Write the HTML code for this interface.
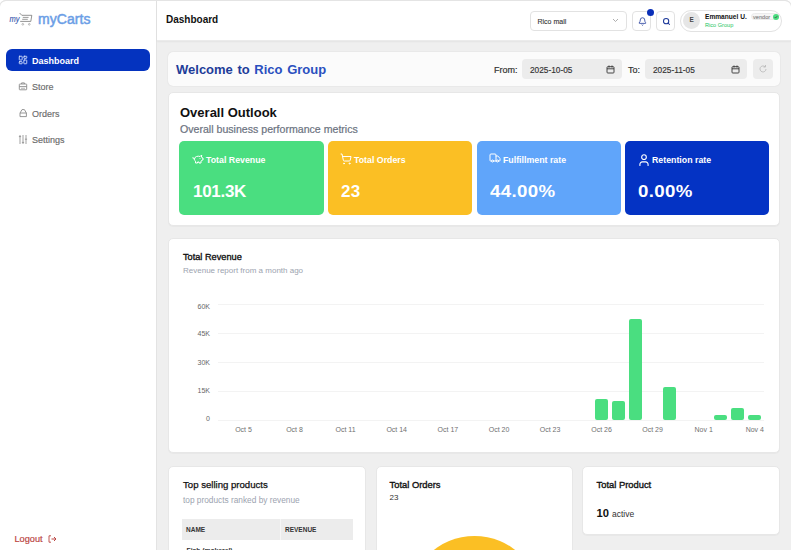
<!DOCTYPE html>
<html><head><meta charset="utf-8">
<style>
*{box-sizing:border-box;margin:0;padding:0}
html,body{width:791px;height:550px;overflow:hidden;background:#efefef;font-family:"Liberation Sans",sans-serif;color:#111}
.abs{position:absolute}
.t{position:absolute;white-space:nowrap;line-height:1}
#side{position:absolute;left:0;top:0;width:157px;height:550px;background:#fff;border-right:1px solid #e3e3e3}
#head{position:absolute;left:157px;top:0;width:634px;height:41px;background:#fff;border-bottom:1px solid #ebebeb;box-shadow:0 1px 1.5px rgba(0,0,0,.05)}
.card{position:absolute;background:#fff;border-radius:5px;border:1px solid #e7e7e7;box-shadow:0 1px 1px rgba(0,0,0,.03)}
.stat{position:absolute;top:140.8px;height:74.2px;border-radius:5px;color:#fff}
.slbl{top:156px;font-size:8.8px;font-weight:bold;color:#fff}
.sval{top:182.6px;font-size:17px;font-weight:bold;color:#fff}
.nav{position:absolute;left:19px;font-size:9px;color:#6b6b6b;line-height:1;white-space:nowrap;display:flex;align-items:center}
.nav svg{margin-right:5px}
.ylab{position:absolute;margin-top:0.6px;right:581px;font-size:7px;color:#666;line-height:1;text-align:right}
.xlab{position:absolute;top:426px;font-size:7px;color:#707070;line-height:1;white-space:nowrap;transform:translateX(-50%)}
.grid{position:absolute;left:218px;width:546px;height:1px;background:#f3f3f3}
.bar{position:absolute;width:13px;background:#4ade80;border-radius:2px}
</style></head>
<body>
<!-- SIDEBAR -->
<div id="side">
  <!-- logo -->
  <svg class="abs" style="left:9px;top:12px" width="25" height="15" viewBox="0 0 25 15">
    <text x="0.6" y="9.9" font-family="Liberation Sans" font-style="italic" font-size="9" fill="#3b5bb0" textLength="10" lengthAdjust="spacingAndGlyphs" stroke="#3b5bb0" stroke-width="0.15">my</text>
    <path d="M10.6 1 L12.8 3.3 L22.8 3.3 L21.8 9.4 L11.2 9.4" fill="none" stroke="#666" stroke-width="0.7"/>
    <path d="M13.8 5.4 H19.6 M13.2 7.3 H18.8" stroke="#666" stroke-width="0.65"/>
    <circle cx="13.8" cy="12.3" r="0.85" fill="none" stroke="#888" stroke-width="0.55"/>
    <circle cx="20.3" cy="12.3" r="0.85" fill="none" stroke="#888" stroke-width="0.55"/>
  </svg>
  <div class="t" style="left:38px;top:12px;font-size:14px;color:#6b9ee6;font-weight:normal;letter-spacing:0.05px;-webkit-text-stroke:0.5px #6b9ee6">myCarts</div>

  <div class="abs" style="left:6px;top:49px;width:144px;height:22px;background:#0433bf;border-radius:6px"></div>
  <div class="t" style="left:32px;top:56.8px;font-size:9px;font-weight:bold;color:#fff">Dashboard</div>
  <svg class="abs" style="left:17.7px;top:55px" width="10" height="10" viewBox="0 0 24 24" fill="none" stroke="#dbe6ff" stroke-width="2.1" stroke-linecap="round" stroke-linejoin="round"><rect width="7" height="9" x="3" y="3" rx="1"/><rect width="7" height="5" x="14" y="3" rx="1"/><rect width="7" height="9" x="14" y="12" rx="1"/><rect width="7" height="5" x="3" y="16" rx="1"/></svg>
  <div class="t" style="left:32px;top:83px;font-size:9px;color:#6b6b6b;-webkit-text-stroke:0.15px #6b6b6b">Store</div>
  <svg class="abs" style="left:18px;top:81px" width="10" height="10" viewBox="0 0 10 10" fill="none" stroke="#8a8a8a" stroke-width="0.9" stroke-linejoin="round"><rect x="1.3" y="3" width="7.4" height="5.8" rx="0.6"/><path d="M3.6 3 V1.9 H6.4 V3 M1.3 5.6 H8.7"/><path d="M3 7.3 H7" stroke-width="0.6"/></svg>
  <div class="t" style="left:32px;top:110px;font-size:9px;color:#6b6b6b;-webkit-text-stroke:0.15px #6b6b6b">Orders</div>
  <svg class="abs" style="left:18px;top:108px" width="10" height="10" viewBox="0 0 10 10" fill="none" stroke="#8a8a8a" stroke-width="0.9" stroke-linejoin="round"><path d="M2 8.6 H8.4 V5 L6.4 1.6 H4 L2 5 Z M2 5 H8.4"/></svg>
  <div class="t" style="left:32px;top:136px;font-size:9px;color:#6b6b6b;-webkit-text-stroke:0.15px #6b6b6b">Settings</div>
  <svg class="abs" style="left:18px;top:134px" width="10" height="11" viewBox="0 0 10 11" fill="none" stroke="#8a8a8a" stroke-width="0.8"><path d="M2 1 V10 M5 1 V10 M8 1 V10 M0.9 2.6 H3.1 M3.9 8.4 H6.1 M6.9 5.2 H9.1"/></svg>

  <div class="t" style="left:14.5px;top:535px;font-size:9.2px;color:#bb4744;-webkit-text-stroke:0.2px #bb4744">Logout</div>
  <svg class="abs" style="left:48px;top:535px" width="9" height="8" viewBox="0 0 9 8"><path d="M3 0.8 H1 V7.2 H3" fill="none" stroke="#bb4744" stroke-width="0.9"/><path d="M3.5 4 H8 M6 2 L8 4 L6 6" fill="none" stroke="#bb4744" stroke-width="1"/></svg>
</div>

<!-- HEADER -->
<div id="head">
  <div class="t" style="left:9px;top:15px;font-size:10px;font-weight:bold;color:#111">Dashboard</div>
  <div class="abs" style="left:373px;top:11px;width:97px;height:20px;border:1px solid #e2e2e2;border-radius:4px"></div>
  <div class="t" style="left:380.5px;top:17.5px;font-size:7px;color:#333;-webkit-text-stroke:0.1px #333">Rico mall</div>
  <svg class="abs" style="left:455px;top:18px" width="7" height="5" viewBox="0 0 7 5"><path d="M1 1 L3.5 3.5 L6 1" fill="none" stroke="#999" stroke-width="0.8"/></svg>

  <div class="abs" style="left:475px;top:11px;width:19px;height:20px;border:1px solid #e2e2e2;border-radius:4px"></div>
  <svg class="abs" style="left:480.5px;top:16.5px" width="9" height="9" viewBox="0 0 24 24" fill="none" stroke="#1e3a9a" stroke-width="2.1" stroke-linecap="round" stroke-linejoin="round"><path d="M10.268 21a2 2 0 0 0 3.464 0"/><path d="M3.262 15.326A1 1 0 0 0 4 17h16a1 1 0 0 0 .74-1.673C19.41 13.956 18 12.499 18 8A6 6 0 0 0 6 8c0 4.499-1.411 5.956-2.738 7.326"/></svg>
  <div class="abs" style="left:490px;top:9px;width:7px;height:7px;border-radius:50%;background:#0a2fb8"></div>

  <div class="abs" style="left:499px;top:11px;width:19px;height:20px;border:1px solid #e2e2e2;border-radius:4px"></div>
  <svg class="abs" style="left:504.5px;top:16.5px" width="9" height="9" viewBox="0 0 24 24" fill="none" stroke="#1e3a9a" stroke-width="2.8" stroke-linecap="round" stroke-linejoin="round"><circle cx="11" cy="11" r="7"/><path d="m20 20-3.5-3.5"/></svg>

  <div class="abs" style="left:523px;top:10px;width:102px;height:22px;border:1px solid #e2e2e2;border-radius:11px"></div>
  <div class="abs" style="left:526px;top:12px;width:17px;height:17px;border-radius:50%;background:#e6e6e6"></div>
  <div class="t" style="left:532.5px;top:17.4px;font-size:6.4px;font-weight:bold;color:#444">E</div>
  <div class="t" style="left:548px;top:14px;font-size:6.6px;font-weight:bold;color:#111">Emmanuel U.</div>
  <div class="t" style="left:548px;top:22.5px;font-size:5.6px;color:#22c55e">Rico Group</div>
  <div class="abs" style="left:594px;top:12.5px;width:28px;height:7.5px;border-radius:4px;background:#f6f6f6;border:0.5px solid #ececec"></div>
  <div class="t" style="left:596px;top:15px;font-size:5.6px;color:#8a8a8a;-webkit-text-stroke:0.15px #8a8a8a">vendor</div>
  <div class="abs" style="left:615.5px;top:13.5px;width:6px;height:6px;border-radius:50%;background:#4ade80"></div><svg class="abs" style="left:615.5px;top:13.5px" width="6" height="6" viewBox="0 0 10 10"><path d="M2.8 5.2 L4.3 6.7 L7.2 3.4" fill="none" stroke="#444" stroke-width="1.3"/></svg>
</div>

<!-- WELCOME -->
<div class="card" style="left:168px;top:52.4px;width:612px;height:33.6px;background:#fbfbfb;border:none;box-shadow:0 0 1.5px rgba(0,0,0,.12)"></div>
<div class="t" style="left:176px;top:63.2px;font-size:13px;font-weight:bold;color:#1e3d99;word-spacing:1px">Welcome to <span style="color:#2a4fbf">Rico Group</span></div>
<div class="t" style="left:494px;top:66px;font-size:9px;color:#333;-webkit-text-stroke:0.2px #333">From:</div>
<div class="abs" style="left:522px;top:59px;width:100px;height:20px;border-radius:4px;background:#ececec"></div>
<div class="t" style="left:530px;top:66px;font-size:8.3px;color:#333;-webkit-text-stroke:0.15px #333">2025-10-05</div>
<svg class="abs" style="left:606px;top:65px" width="9" height="9" viewBox="0 0 9 9"><rect x="1" y="1.7" width="7" height="6.3" rx="0.8" fill="none" stroke="#333" stroke-width="0.9"/><path d="M1 3.8 H8 M3 0.5 V2.5 M6 0.5 V2.5" stroke="#333" stroke-width="0.9"/></svg>
<div class="t" style="left:628px;top:66px;font-size:9px;color:#333;-webkit-text-stroke:0.2px #333">To:</div>
<div class="abs" style="left:645px;top:59px;width:102px;height:20px;border-radius:4px;background:#ececec"></div>
<div class="t" style="left:653px;top:66px;font-size:8.3px;color:#333;-webkit-text-stroke:0.15px #333">2025-11-05</div>
<svg class="abs" style="left:731px;top:65px" width="9" height="9" viewBox="0 0 9 9"><rect x="1" y="1.7" width="7" height="6.3" rx="0.8" fill="none" stroke="#333" stroke-width="0.9"/><path d="M1 3.8 H8 M3 0.5 V2.5 M6 0.5 V2.5" stroke="#333" stroke-width="0.9"/></svg>
<div class="abs" style="left:753px;top:59px;width:20px;height:20px;border-radius:4px;background:#ececec"></div>
<svg class="abs" style="left:758px;top:64px" width="10" height="10" viewBox="0 0 10 10"><path d="M8 5 a3 3 0 1 1 -1 -2.3" fill="none" stroke="#bbb" stroke-width="0.9"/><path d="M7.5 1 V3 H5.5" fill="none" stroke="#bbb" stroke-width="0.9"/></svg>

<!-- OVERALL OUTLOOK -->
<div class="card" style="left:168px;top:92px;width:612px;height:134px"></div>
<div class="t" style="left:180px;top:105.7px;font-size:13px;font-weight:bold;color:#111">Overall Outlook</div>
<div class="t" style="left:180px;top:123.5px;font-size:10.6px;color:#6b7280;-webkit-text-stroke:0.2px #6b7280">Overall business performance metrics</div>

<div class="stat" style="left:179px;width:145px;background:#4ade80"></div>
<div class="stat" style="left:328px;width:144px;background:#fbbf24"></div>
<div class="stat" style="left:477px;width:144px;background:#60a5fa"></div>
<div class="stat" style="left:625px;width:144px;background:#0433c4"></div>
<svg class="abs" style="left:192px;top:153px" width="12" height="12" viewBox="0 0 24 24" fill="none" stroke="#fff" stroke-width="2" stroke-linecap="round" stroke-linejoin="round"><path d="M19 5c-1.5 0-2.8 1.4-3 2-3.5-1.5-11-.3-11 5 0 1.8 0 3 2 4.5V20h4v-2h3v2h4v-4c1-.5 1.7-1 2-2h2v-4h-2c0-1-.5-1.5-1-2V5z"/><path d="M2 9v1c0 1.1.9 2 2 2h1"/><path d="M16 11h.01"/></svg>
<svg class="abs" style="left:339.8px;top:153.3px" width="12" height="12" viewBox="0 0 24 24" fill="none" stroke="#fff" stroke-width="2" stroke-linecap="round" stroke-linejoin="round"><circle cx="8" cy="21" r="1"/><circle cx="19" cy="21" r="1"/><path d="M2.05 2.05h2l2.66 12.42a2 2 0 0 0 2 1.58h9.78a2 2 0 0 0 1.95-1.57l1.65-7.43H5.12"/></svg>
<svg class="abs" style="left:489px;top:152px" width="12" height="12" viewBox="0 0 24 24" fill="none" stroke="#fff" stroke-width="2" stroke-linecap="round" stroke-linejoin="round"><path d="M14 18V6a2 2 0 0 0-2-2H4a2 2 0 0 0-2 2v11a1 1 0 0 0 1 1h2"/><path d="M15 18H9"/><path d="M19 18h2a1 1 0 0 0 1-1v-3.65a1 1 0 0 0-.22-.624l-3.48-4.35A1 1 0 0 0 17.52 8H14"/><circle cx="17" cy="18" r="2"/><circle cx="7" cy="18" r="2"/></svg>
<svg class="abs" style="left:636.5px;top:152.5px" width="14" height="13" viewBox="0 0 24 22" preserveAspectRatio="none" fill="none" stroke="#fff" stroke-width="1.9" stroke-linecap="round" stroke-linejoin="round"><path d="M19 21v-2a4 4 0 0 0-4-4H9a4 4 0 0 0-4 4v2"/><circle cx="12" cy="7" r="4"/></svg>
<div class="t slbl" style="left:206px">Total Revenue</div>
<div class="t slbl" style="left:354px">Total Orders</div>
<div class="t slbl" style="left:503px">Fulfillment rate</div>
<div class="t slbl" style="left:652px">Retention rate</div>
<div class="t sval" style="left:193px;letter-spacing:-0.3px">101.3K</div>
<div class="t sval" style="left:341px;letter-spacing:0.2px">23</div>
<div class="t sval" style="left:490px;letter-spacing:0.3px;transform:scaleX(1.1);transform-origin:0 0">44.00%</div>
<div class="t sval" style="left:638px;letter-spacing:0.3px;transform:scaleX(1.1);transform-origin:0 0">0.00%</div>

<!-- CHART -->
<div class="card" style="left:168px;top:238px;width:612px;height:214.8px"></div>
<div class="t" style="left:183px;top:253px;font-size:9.2px;color:#111;-webkit-text-stroke:0.35px #111">Total Revenue</div>
<div class="t" style="left:183px;top:266.7px;font-size:8px;color:#9ca3af">Revenue report from a month ago</div>

<div class="grid" style="top:304px"></div>
<div class="grid" style="top:333px"></div>
<div class="grid" style="top:362px"></div>
<div class="grid" style="top:391px"></div>
<div class="grid" style="top:420.3px"></div>
<div class="ylab" style="top:302.5px">60K</div>
<div class="ylab" style="top:329.3px">45K</div>
<div class="ylab" style="top:358.3px">30K</div>
<div class="ylab" style="top:386.8px">15K</div>
<div class="ylab" style="top:414.8px">0</div>

<div class="xlab" style="left:243.5px">Oct 5</div>
<div class="xlab" style="left:294.5px">Oct 8</div>
<div class="xlab" style="left:345.5px">Oct 11</div>
<div class="xlab" style="left:396.7px">Oct 14</div>
<div class="xlab" style="left:447.9px">Oct 17</div>
<div class="xlab" style="left:499px">Oct 20</div>
<div class="xlab" style="left:550px">Oct 23</div>
<div class="xlab" style="left:601.5px">Oct 26</div>
<div class="xlab" style="left:652.5px">Oct 29</div>
<div class="xlab" style="left:703.7px">Nov 1</div>
<div class="xlab" style="left:754.8px">Nov 4</div>

<div class="bar" style="left:595px;top:399px;height:20.5px"></div>
<div class="bar" style="left:612px;top:401px;height:18.5px"></div>
<div class="bar" style="left:629px;top:318.6px;height:101.2px"></div>
<div class="bar" style="left:663px;top:386.5px;height:33px"></div>
<div class="bar" style="left:714px;top:415px;height:4.6px"></div>
<div class="bar" style="left:731px;top:408px;height:11.5px"></div>
<div class="bar" style="left:748px;top:415px;height:4.6px"></div>

<!-- BOTTOM CARDS -->
<div class="card" style="left:168.3px;top:466px;width:198.2px;height:100px"></div>
<div class="t" style="left:183px;top:480px;font-size:9.6px;color:#111;-webkit-text-stroke:0.25px #111">Top selling products</div>
<div class="t" style="left:183px;top:496px;font-size:8.3px;color:#9ca3af">top products ranked by revenue</div>
<div class="abs" style="left:182px;top:519px;width:171px;height:21px;background:#ececec"></div>
<div class="abs" style="left:280px;top:519px;width:1px;height:21px;background:#f6f6f6"></div>
<div class="t" style="left:186px;top:527px;font-size:6.5px;font-weight:bold;color:#333">NAME</div>
<div class="t" style="left:285px;top:527px;font-size:6.5px;font-weight:bold;color:#333">REVENUE</div>
<div class="t" style="left:186.5px;top:548px;font-size:6.8px;font-weight:bold;color:#333">Fish (makerel)</div>

<div class="card" style="left:376px;top:466px;width:197px;height:100px;overflow:hidden">
  <div class="abs" style="left:30.9px;top:68.6px;width:133.4px;height:133.4px;border-radius:50%;background:#fbbf24"></div>
</div>
<div class="t" style="left:389.5px;top:480.4px;font-size:9.4px;color:#111;-webkit-text-stroke:0.35px #111">Total Orders</div>
<div class="t" style="left:389.5px;top:493.8px;font-size:8px;color:#333">23</div>

<div class="card" style="left:582px;top:466px;width:198px;height:69px"></div>
<div class="t" style="left:596.5px;top:480.4px;font-size:9.4px;color:#111;-webkit-text-stroke:0.35px #111">Total Product</div>
<div class="t" style="left:596.5px;top:507.8px;font-size:11.2px;font-weight:bold;color:#111">10<span style="margin-left:3px;font-size:8.5px;font-weight:normal;color:#333">active</span></div>
<div class="abs" style="left:0;top:0;width:791px;height:20px;border-top:1px solid #e4e4e4;border-radius:6px 6px 0 0;pointer-events:none"></div>
<div class="abs" style="left:-1px;top:0;width:8px;height:8px;border-top:1px solid #e4e4e4;border-left:1px solid #e4e4e4;border-radius:7px 0 0 0"></div>
<div class="abs" style="left:784px;top:0;width:8px;height:8px;border-top:1px solid #e4e4e4;border-right:1px solid #e4e4e4;border-radius:0 7px 0 0"></div>
</body></html>
